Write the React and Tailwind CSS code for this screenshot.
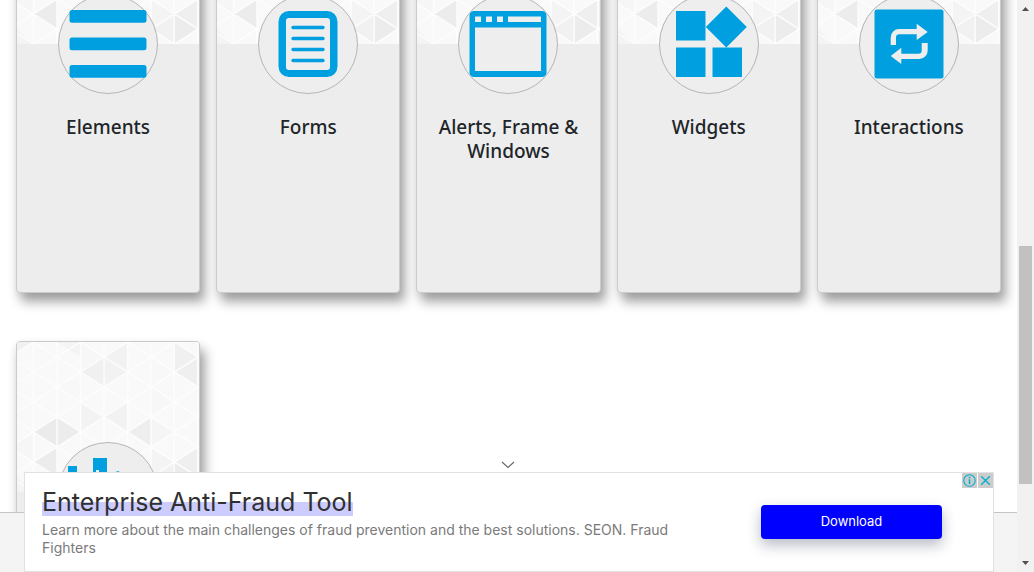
import React from "react";

const BLUE = "#009fe0";

const EDGE_X = [16.5, 40, 63.5, 87, 110.5, 134, 157, 180.5];

const TRIANGLES = [
  ["0,10 0,0 16,0", "#f1f1f1"],
  ["40,0 63.5,0 63.5,15 40,0", "#f4f4f4"],
  ["63.5,0 87,15 63.5,30", "#f7f7f7"],
  ["87,15 110.5,0 110.5,30", "#f2f2f2"],
  ["63.5,30 87,15 87,45", "#f0f0f0"],
  ["87,15 87,45 110.5,30", "#f2f2f2"],
  ["157,0 180.5,15 157,30", "#f0f0f0"],
  ["157,30 180.5,15 180.5,45", "#efefef"],
  ["40,45 63.5,30 63.5,60", "#f8f8f8"],
  ["134,15 157,30 134,45", "#f8f8f8"],
  ["63.5,60 87,75 63.5,90", "#f3f3f3"],
  ["87,75 110.5,60 110.5,90", "#f2f2f2"],
  ["16.5,90 40,75 40,105", "#ebebeb"],
  ["40,75 63.5,90 40,105", "#ececec"],
  ["110.5,90 134,75 134,105", "#eeeeee"],
  ["134,75 157,90 134,105", "#f5f5f5"],
  ["134,45 157,60 134,75", "#f7f7f7"],
  ["16.5,120 40,105 40,135", "#ececec"],
  ["0,100 16.5,90 16.5,120 0,110", "#f6f6f6"],
  ["134,105 157,120 134,135", "#f4f4f4"],
  ["157,120 180.5,105 180.5,135", "#efefef"],
  ["134,135 157,120 157,150", "#f1f1f1"],
  ["157,120 180.5,135 157,150", "#ececec"],
  ["0,135 16.5,150 0,150", "#f4f4f4"],
];

function diagonals() {
  const lines = [];
  for (let y = -120; y <= 270; y += 30) {
    lines.push(`M-7 ${y + 15}L193 ${y + 15 + 127.7}`);
    lines.push(`M-7 ${y + 15}L193 ${y + 15 - 127.7}`);
  }
  return lines.join("");
}

function Pattern() {
  return (
    <svg viewBox="0 0 182 150" preserveAspectRatio="none" className="block h-[150px] w-full" aria-hidden="true">
      <rect width="182" height="150" fill="#f9f9f9" />
      {TRIANGLES.map(([points, fill]) => (
        <polygon key={points} points={points} fill={fill} />
      ))}
      <path d={diagonals() + EDGE_X.map((x) => `M${x} 0V150`).join("")} stroke="#fdfdfd" strokeWidth="1.4" fill="none" />
    </svg>
  );
}

const icons = {
  elements: (
    <g>
      <rect x="11.5" y="16" width="77" height="12.7" rx="2.5" />
      <rect x="11.5" y="43.6" width="77" height="12.7" rx="2.5" />
      <rect x="11.5" y="71" width="77" height="12.7" rx="2.5" />
    </g>
  ),
  forms: (
    <g>
      <path
        fillRule="evenodd"
        d="M31 17H69a10.5 10.5 0 0 1 10.500 10.500V72.500a10.500 10.500 0 0 1-10.500 10.500H31a10.500 10.500 0 0 1-10.500-10.500V27.500A10.500 10.500 0 0 1 31 17ZM31 24a3 3 0 0 0-3 3V73a3 3 0 0 0 3 3H69a3 3 0 0 0 3-3V27a3 3 0 0 0-3-3Z"
      />
      <path d="M35 33.500H65M35 44.500H65M35 55.500H65M35 66.500H65" stroke={BLUE} strokeWidth="3.4" strokeLinecap="round" />
    </g>
  ),
  windows: (
    <path
      fillRule="evenodd"
      d="M16 17H84a4.500 4.500 0 0 1 4.500 4.500V78.500a4.500 4.500 0 0 1-4.500 4.500H16a4.500 4.500 0 0 1-4.500-4.500V21.500A4.500 4.500 0 0 1 16 17ZM17 22.500V28H23V22.500ZM28 22.500V28H34V22.500ZM39 22.500V28H45V22.500ZM50 22.500V28H83V22.500ZM17 33.500V77H83V33.500Z"
    />
  ),
  widgets: (
    <path d="M17 17H46.500V46.500H17ZM17 53.500H46.500V83H17ZM53.500 53.500H83V83H53.500ZM67.300 12.500L87.800 33L67.300 53.500L46.800 33Z" />
  ),
  interactions: (
    <g>
      <rect x="15.500" y="15.500" width="69" height="69" rx="2.500" />
      <path
        fill="#eee"
        d="M31.700 51V43.500A8.500 8.500 0 0 1 40.200 35H57.700V29.700L68.700 38L57.700 46V40.300H40.200A3.200 3.200 0 0 0 37 43.500V51ZM68.700 49V56.500A8.500 8.500 0 0 1 60.200 65H42.300V70L31.700 62L42.300 53.700V59.700H59.500A3.200 3.200 0 0 0 62.700 56.500V49Z"
      />
    </g>
  ),
  books: (
    <g>
      <rect x="10" y="24" width="9" height="60" />
      <rect x="35" y="16" width="14" height="68" />
      <rect x="38" y="28" width="3" height="3" fill="#eee" />
      <path d="M57 30L61 29L73 82L61 84Z" />
    </g>
  ),
};

const cards = [
  { title: "Elements", icon: "elements" },
  { title: "Forms", icon: "forms" },
  { title: "Alerts, Frame & Windows", icon: "windows" },
  { title: "Widgets", icon: "widgets" },
  { title: "Interactions", icon: "interactions" },
  { icon: "books" },
];

function Card({ title, icon }) {
  return (
    <a
      href={"#" + icon}
      aria-label={title ?? icon}
      className="flex h-[400px] flex-col overflow-hidden rounded border border-[#cbcbcb] bg-[#ededed] shadow-[5px_9px_12px_rgba(0,0,0,0.35),0_3px_8px_rgba(0,0,0,0.08)]"
    >
      <Pattern />
      <span className="-mt-[50px] self-center">
        <svg viewBox="0 0 100 100" className="block size-[100px]" fill={BLUE} aria-hidden="true">
          <circle cx="50" cy="50" r="49.500" fill="#eee" stroke="#b5b5b5" />
          {icons[icon]}
        </svg>
      </span>
      {title && (
        <h5 className="px-4 pt-[21px] text-center font-['Noto_Sans','Open_Sans',sans-serif] text-[19px] leading-6 font-medium text-[#212529]">
          {title}
        </h5>
      )}
    </a>
  );
}

function Scrollbar() {
  return (
    <div className="flex w-[17px] shrink-0 flex-col items-center justify-between bg-[#f1f1f1]" aria-hidden="true">
      <svg viewBox="0 0 17 17" className="size-[17px]" fill="#505050">
        <path d="M5 11L8.500 7L12 11Z" />
      </svg>
      <div className="flex w-[13px] grow flex-col">
        <div className="grow-[229]" />
        <div className="grow-[238] bg-[#c1c1c1]" />
        <div className="grow-[71]" />
      </div>
      <svg viewBox="0 0 17 17" className="size-[17px]" fill="#505050">
        <path d="M5 6L8.500 10L12 6Z" />
      </svg>
    </div>
  );
}

function Ad() {
  return (
    <section className="mr-[23px] ml-6 flex h-[100px] items-start border border-[#e2e2e2] bg-white font-['Inter',sans-serif]">
      <div className="min-w-0 grow pt-[15px] pl-[17px]">
        <h2 className="w-fit bg-[linear-gradient(transparent_50%,#ccccff_50%)] text-[25px] leading-7 text-[#303030]">
          Enterprise Anti-Fraud Tool
        </h2>
        <p className="mt-[5px] max-w-[670px] text-[14px] leading-[18px] text-[#7a7a7a]">
          Learn more about the main challenges of fraud prevention and the best solutions. SEON. Fraud Fighters
        </p>
      </div>
      <button
        type="button"
        className="mt-8 h-[34px] w-[181px] shrink-0 rounded bg-[#0000ff] text-[13px] text-white shadow-[0_6px_14px_rgba(20,30,60,0.3)]"
      >
        Download
      </button>
      <div className="ml-[20px] flex shrink-0 gap-px">
        <button type="button" aria-label="Ad information" className="size-[15px] bg-[#cccccc]">
          <svg viewBox="0 0 15 15" className="block size-[15px]" fill="none" stroke="#00aecd">
            <circle cx="7.500" cy="7.500" r="5.700" strokeWidth="1.100" />
            <path d="M7.500 6.300V11M7.500 3.700V5.200" strokeWidth="1.500" />
          </svg>
        </button>
        <button type="button" aria-label="Close ad" className="size-[15px] bg-[#cccccc]">
          <svg viewBox="0 0 15 15" className="block size-[15px]" fill="none" stroke="#00aecd" strokeWidth="1.300">
            <path d="M3.200 3.200L11.800 11.800M11.800 3.200L3.200 11.800" />
          </svg>
        </button>
      </div>
    </section>
  );
}

export default function App() {
  return (
    <div className="flex h-screen overflow-hidden bg-white">
      <div className="relative min-w-0 grow overflow-hidden">
        <main className="-mt-[107px] grid grid-cols-5 gap-x-4 gap-y-12 px-4">
          {cards.map((card) => (
            <Card key={card.icon} {...card} />
          ))}
        </main>
        <footer className="absolute inset-x-0 bottom-0 h-[60px] border-t border-[#c4c4c4] bg-[#f4f4f4]" />
        <div className="absolute inset-x-0 bottom-0 flex flex-col">
          <button type="button" aria-label="Collapse ad" className="mb-[2px] flex h-3 self-center">
            <svg viewBox="0 0 16 12" className="h-3 w-4" fill="none" stroke="#666" strokeWidth="1.100">
              <path d="M1 4L7 9.500L13 4" />
            </svg>
          </button>
          <Ad />
        </div>
      </div>
      <Scrollbar />
    </div>
  );
}
